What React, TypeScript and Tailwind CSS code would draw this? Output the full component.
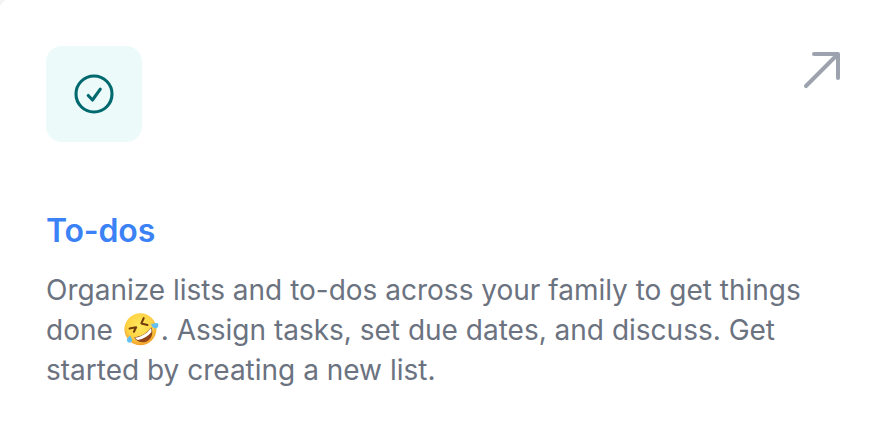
function CheckIcon() {
  return (
    <svg className="size-12" viewBox="0 0 24 24" fill="none" stroke="#00696f" strokeWidth="1.55" strokeLinecap="round" strokeLinejoin="round" aria-hidden="true">
      <path d="M9.1 12.75L11.25 15 15.15 9.6M21 12a9 9 0 11-18 0 9 9 0 0118 0z" />
    </svg>
  );
}

function ArrowIcon() {
  return (
    <svg className="size-12" viewBox="0 0 24 24" fill="#9ca3af" aria-hidden="true">
      <path d="M20 4h1a1 1 0 00-1-1v1zm-1 12a1 1 0 102 0h-2zM8 3a1 1 0 000 2V3zM3.293 19.293a1 1 0 101.414 1.414l-1.414-1.414zM19 4v12h2V4h-2zm1-1H8v2h12V3zm-.707.293l-16 16 1.414 1.414 16-16-1.414-1.414z" />
    </svg>
  );
}

function LaughingEmoji() {
  return (
    <svg className="-mt-2 inline-block h-[34px] w-[40px] overflow-visible align-middle" viewBox="0 0 40 34" role="img" aria-label="Rolling on the floor laughing">
      <defs>
        <radialGradient id="face" cx="0.48" cy="0.4" r="0.6">
          <stop offset="0" stopColor="#ffe95e" />
          <stop offset="0.65" stopColor="#ffd444" />
          <stop offset="1" stopColor="#f2a02e" />
        </radialGradient>
        <linearGradient id="mouth" x1="0" y1="0" x2="0.5" y2="1">
          <stop offset="0" stopColor="#5c2710" />
          <stop offset="1" stopColor="#9a4918" />
        </linearGradient>
      </defs>
      <circle cx="19.4" cy="18.3" r="16" fill="url(#face)" />
      <g fill="none" stroke="#713c0c" strokeWidth="2.1" strokeLinecap="round" strokeLinejoin="round">
        <path d="M8.6 17.5L15.1 16.2L12.9 20.7" />
        <path d="M22.7 7.2L20.4 12.4L26.5 14" />
      </g>
      <path d="M13.2 26.6Q24.5 24.8 30.3 16.2C33 22.5 30.2 29 24.8 30.9C20 32.3 15.3 30.4 13.2 26.6Z" fill="url(#mouth)" />
      <path d="M14 26.8Q24.5 25 30 17Q30.9 19.4 30.4 21.3Q25 27.7 17 29Q15.1 28.5 14 26.8Z" fill="#fff" />
      <path d="M30.1 12.8C32.5 13.2 36.7 10.4 37.3 13.4C37.7 16.6 35 18.3 32.9 17.1C31.3 16.2 30.4 14.4 30.1 12.8Z" fill="#62c1f0" />
      <path d="M9.3 24.7C10.1 27.1 12.5 29.9 10 31.3C7.4 32.5 5.3 30.5 6 28.3C6.6 26.6 8 25.4 9.3 24.7Z" fill="#62c1f0" />
    </svg>
  );
}

export default function App() {
  return (
    <div className="h-[432px] w-[888px] overflow-hidden bg-[#f3f4f6] font-['Inter',sans-serif]">
      <article className="-mt-0.5 -ml-0.5 h-[434px] rounded-tl-[16px] bg-white pt-12 pr-[42px] pl-12">
        <div className="flex items-start justify-between">
          <span className="flex size-24 items-center justify-center rounded-2xl bg-[#ecfaf9]">
            <CheckIcon />
          </span>
          <ArrowIcon />
        </div>
        <h3 className="mt-[65px] text-[32px] leading-[48px] font-semibold tracking-[-0.15px] text-[#3b82f6]">To-dos</h3>
        <p className="mt-[15px] text-[28px] leading-10 whitespace-nowrap text-[#6b7280]">
          Organize lists and to-dos across your family to get things
          <br />
          done <LaughingEmoji />. Assign tasks, set due dates, and discuss. Get
          <br />
          started by creating a new list.
        </p>
      </article>
    </div>
  );
}
